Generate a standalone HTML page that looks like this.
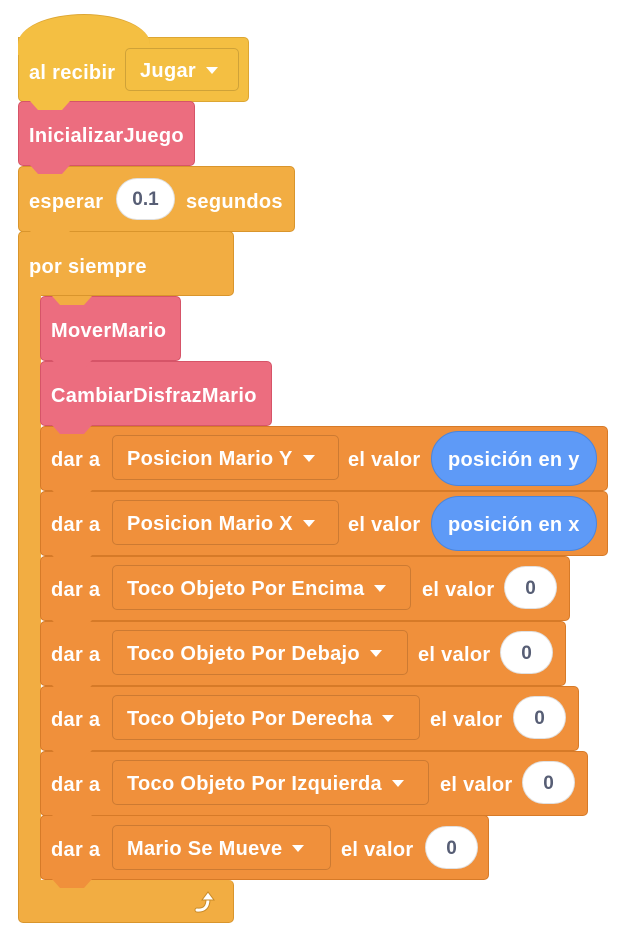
<!DOCTYPE html>
<html><head><meta charset="utf-8"><style>
body{margin:0;width:624px;height:939px;background:#fff;position:relative;overflow:hidden;font-family:"Liberation Sans",Arial,sans-serif;}
.b{position:absolute;box-sizing:border-box;border-radius:5px;}
.t{position:absolute;color:#fff;font-size:20px;letter-spacing:0.3px;font-weight:bold;line-height:20px;white-space:nowrap;padding-top:2px;}
.dd{position:absolute;box-sizing:border-box;border-radius:5px;border:1px solid rgba(0,0,0,0.15);}
.dd .t{padding-top:0;}
.ov{position:absolute;box-sizing:border-box;background:#fff;border-radius:22px;border:1px solid rgba(0,0,0,0.12);color:#575e75;font-size:19px;font-weight:bold;text-align:center;padding-top:2px;}
.tab{position:absolute;width:40px;height:9px;clip-path:polygon(0 0,100% 0,80% 100%,20% 100%);}
.y{background:#F4BF42;border:1px solid #DDA632;}
.p{background:#EC6D7F;border:1px solid #D65468;}
.c{background:#F2AD42;border:1px solid #D9952C;}
.o{background:#F0903B;border:1px solid #D67A28;}
.arr{display:inline-block;width:0;height:0;border-left:6px solid transparent;border-right:6px solid transparent;border-top:7px solid #fff;vertical-align:middle;margin-left:10px;margin-top:-3px;}
</style></head><body>
<div class="b y" style="left:18px;top:37px;width:231px;height:65px;border-top-left-radius:0"></div>
<div style="position:absolute;left:18px;top:14px;width:132px;height:40px;background:#F4BF42;border-radius:66px 66px 0 0/30px 30px 0 0;border-top:1px solid #DDA632;"></div>
<div class="t" style="left:29px;top:61px">al recibir</div>
<div class="dd" style="left:125px;top:48px;width:114px;height:43px"><div class="t" style="left:14px;top:12px">Jugar<span class="arr"></span></div></div>
<div class="b c" style="left:18px;top:231px;width:216px;height:65px"></div>
<div class="b c" style="left:18px;top:280px;width:23px;height:610px;border-radius:0 0 0 5px;border-top:none;border-bottom:none"></div>
<div class="b c" style="left:18px;top:880px;width:216px;height:43px;border-top:none"></div>
<div style="position:absolute;left:19px;top:280px;width:22px;height:620px;background:#F2AD42"></div>
<div class="t" style="left:29px;top:255px">por siempre</div>
<svg style="position:absolute;left:192px;top:888px" width="30" height="30" viewBox="0 0 30 30"><path d="M5 22 Q16 23 16 11" fill="none" stroke="#C98A27" stroke-width="5" stroke-linecap="round"/><path d="M5 22 Q16 23 16 11" fill="none" stroke="#fff" stroke-width="3" stroke-linecap="round"/><path d="M10 12 L16 4 L22 12 Z" fill="#fff" stroke="#C98A27" stroke-width="1"/></svg>
<div class="b c" style="left:18px;top:166px;width:277px;height:66px"></div>
<div class="tab" style="left:30px;top:231px;background:#F2AD42"></div>
<div class="t" style="left:29px;top:190px">esperar</div>
<div class="ov" style="left:116px;top:178px;width:59px;height:42px;line-height:38px">0.1</div>
<div class="t" style="left:186px;top:190px">segundos</div>
<div class="b p" style="left:18px;top:101px;width:177px;height:65px"></div>
<div class="tab" style="left:30px;top:165px;background:#EC6D7F"></div>
<div class="tab" style="left:30px;top:101px;background:#F4BF42"></div>
<div class="t" style="left:29px;top:124px">InicializarJuego</div>

<div class="b o" style="left:40px;top:815px;width:449px;height:65px"></div>
<div class="tab" style="left:52px;top:879px;background:#F0903B"></div>
<div class="t" style="left:51px;top:838px">dar a</div>
<div class="dd" style="left:112px;top:825px;width:219px;height:45px"><div class="t" style="left:14px;top:13px">Mario Se Mueve<span class="arr"></span></div></div>
<div class="t" style="left:341px;top:838px">el valor</div>
<div class="ov" style="left:425px;top:826px;width:53px;height:43px;line-height:39px">0</div>

<div class="b o" style="left:40px;top:751px;width:548px;height:65px"></div>
<div class="tab" style="left:52px;top:815px;background:#F0903B"></div>
<div class="t" style="left:51px;top:773px">dar a</div>
<div class="dd" style="left:112px;top:760px;width:317px;height:45px"><div class="t" style="left:14px;top:13px">Toco Objeto Por Izquierda<span class="arr"></span></div></div>
<div class="t" style="left:440px;top:773px">el valor</div>
<div class="ov" style="left:522px;top:761px;width:53px;height:43px;line-height:39px">0</div>

<div class="b o" style="left:40px;top:686px;width:539px;height:65px"></div>
<div class="tab" style="left:52px;top:750px;background:#F0903B"></div>
<div class="t" style="left:51px;top:708px">dar a</div>
<div class="dd" style="left:112px;top:695px;width:308px;height:45px"><div class="t" style="left:14px;top:13px">Toco Objeto Por Derecha<span class="arr"></span></div></div>
<div class="t" style="left:430px;top:708px">el valor</div>
<div class="ov" style="left:513px;top:696px;width:53px;height:43px;line-height:39px">0</div>

<div class="b o" style="left:40px;top:621px;width:526px;height:65px"></div>
<div class="tab" style="left:52px;top:685px;background:#F0903B"></div>
<div class="t" style="left:51px;top:643px">dar a</div>
<div class="dd" style="left:112px;top:630px;width:296px;height:45px"><div class="t" style="left:14px;top:13px">Toco Objeto Por Debajo<span class="arr"></span></div></div>
<div class="t" style="left:418px;top:643px">el valor</div>
<div class="ov" style="left:500px;top:631px;width:53px;height:43px;line-height:39px">0</div>

<div class="b o" style="left:40px;top:556px;width:530px;height:65px"></div>
<div class="tab" style="left:52px;top:620px;background:#F0903B"></div>
<div class="t" style="left:51px;top:578px">dar a</div>
<div class="dd" style="left:112px;top:565px;width:299px;height:45px"><div class="t" style="left:14px;top:13px">Toco Objeto Por Encima<span class="arr"></span></div></div>
<div class="t" style="left:422px;top:578px">el valor</div>
<div class="ov" style="left:504px;top:566px;width:53px;height:43px;line-height:39px">0</div>

<div class="b o" style="left:40px;top:491px;width:568px;height:65px"></div>
<div class="tab" style="left:52px;top:555px;background:#F0903B"></div>
<div class="t" style="left:51px;top:513px">dar a</div>
<div class="dd" style="left:112px;top:500px;width:227px;height:45px"><div class="t" style="left:14px;top:13px">Posicion Mario X<span class="arr"></span></div></div>
<div class="t" style="left:348px;top:513px">el valor</div>
<div style="position:absolute;left:431px;top:496px;width:166px;height:55px;background:#5E9AF7;border:1px solid #4A85DD;box-sizing:border-box;border-radius:28px"></div>
<div class="t" style="left:448px;top:513px">posición en x</div>

<div class="b o" style="left:40px;top:426px;width:568px;height:65px"></div>
<div class="tab" style="left:52px;top:490px;background:#F0903B"></div>
<div class="t" style="left:51px;top:448px">dar a</div>
<div class="dd" style="left:112px;top:435px;width:227px;height:45px"><div class="t" style="left:14px;top:13px">Posicion Mario Y<span class="arr"></span></div></div>
<div class="t" style="left:348px;top:448px">el valor</div>
<div style="position:absolute;left:431px;top:431px;width:166px;height:55px;background:#5E9AF7;border:1px solid #4A85DD;box-sizing:border-box;border-radius:28px"></div>
<div class="t" style="left:448px;top:448px">posición en y</div>

<div class="b p" style="left:40px;top:361px;width:232px;height:65px"></div>
<div class="tab" style="left:52px;top:425px;background:#EC6D7F"></div>
<div class="t" style="left:51px;top:384px">CambiarDisfrazMario</div>
<div class="b p" style="left:40px;top:296px;width:141px;height:65px"></div>
<div class="tab" style="left:52px;top:360px;background:#EC6D7F"></div>
<div class="tab" style="left:52px;top:296px;background:#F2AD42"></div>
<div class="t" style="left:51px;top:319px">MoverMario</div>
</body></html>
